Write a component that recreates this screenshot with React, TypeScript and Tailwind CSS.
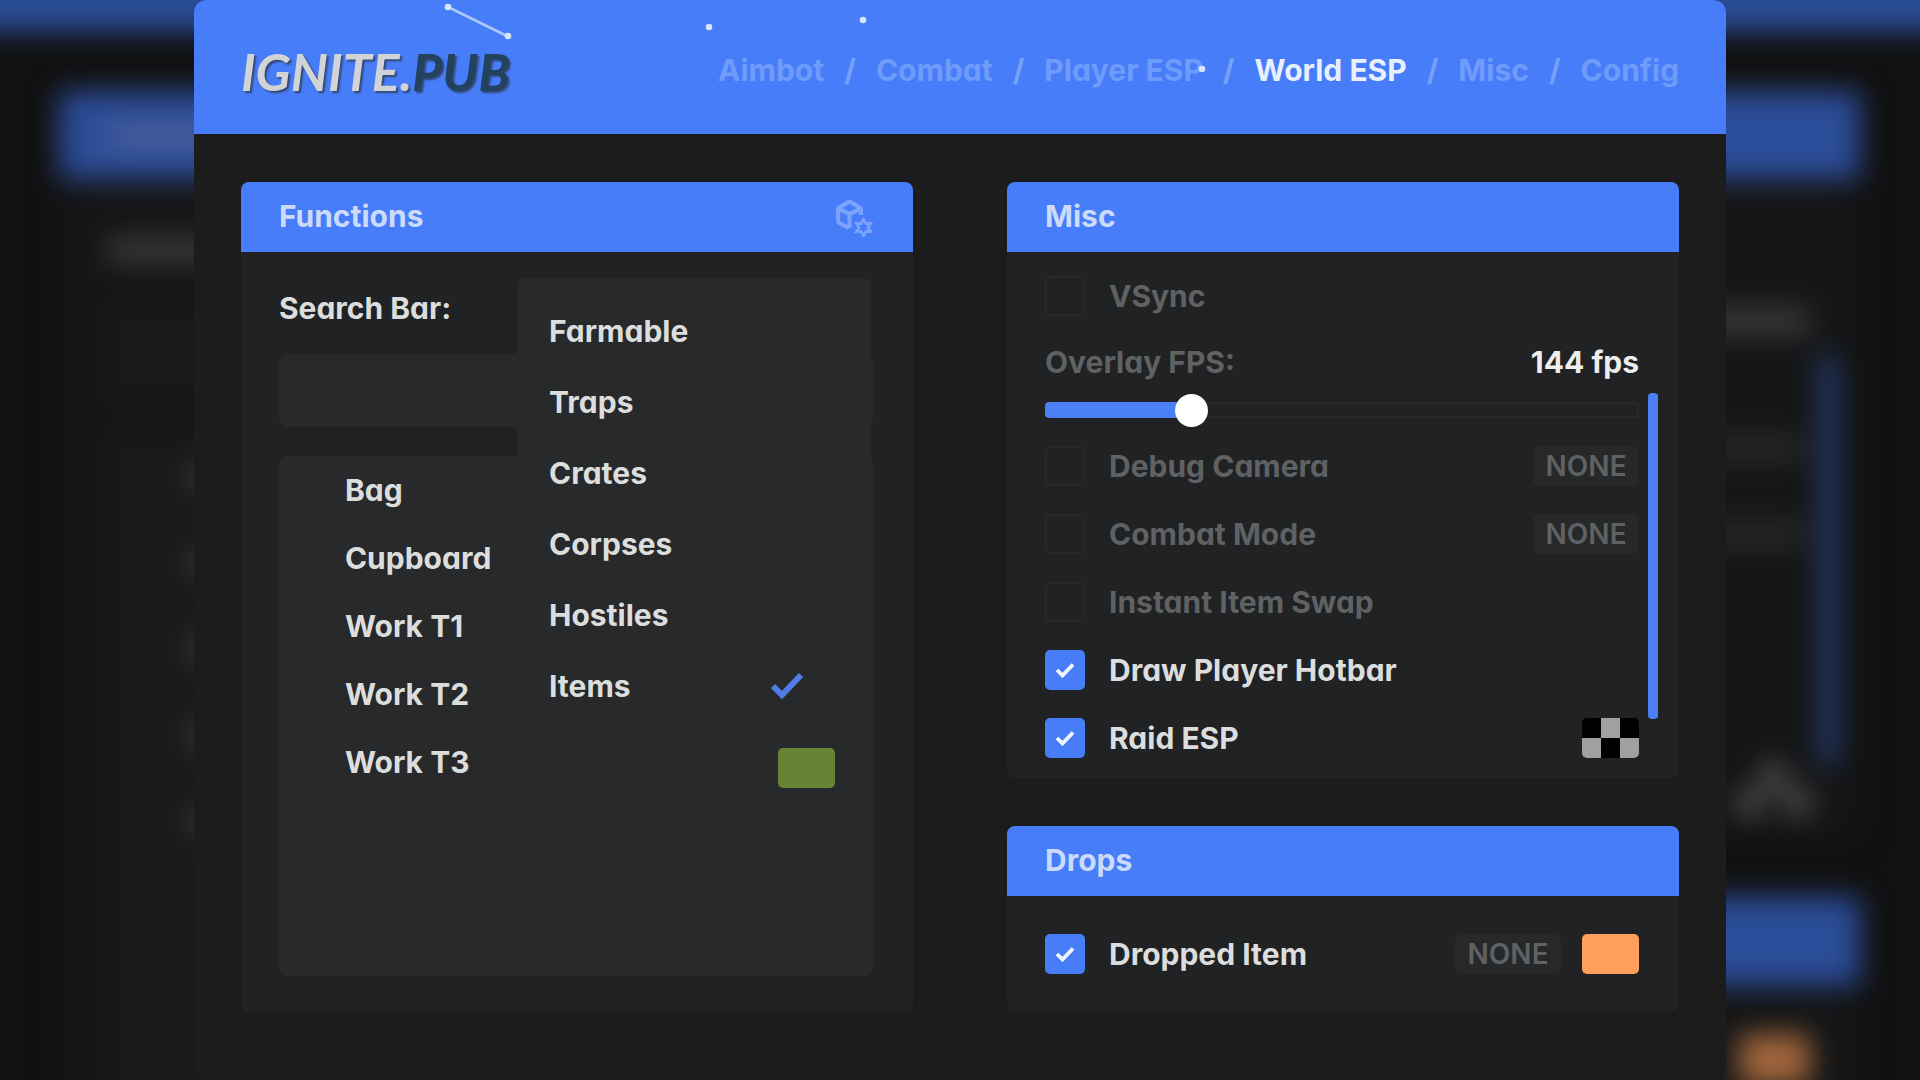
import { useState, type ReactNode } from "react";

const NAV = ["Aimbot", "Combat", "Player ESP", "World ESP", "Misc", "Config"];
const OBJECTS = ["Bag", "Cupboard", "Work T1", "Work T2", "Work T3"];
const CATEGORIES = ["Farmable", "Traps", "Crates", "Corpses", "Hostiles", "Items"];

function Backdrop() {
  return (
    <div aria-hidden="true" className="absolute inset-0 overflow-hidden bg-[#111111]">
      <div className="absolute inset-0 blur-[14px]">
        <div className="absolute -inset-x-10 -top-10 h-[71px] bg-[#2b4c98]" />

        <div className="absolute top-[179px] -bottom-10 left-[59px] w-[300px] bg-[#141516]" />
        <div className="absolute top-[91px] left-[59px] h-[88px] w-[300px] bg-[#2b4c98]" />
        <div className="absolute top-[124px] left-[107px] h-6 w-[180px] bg-[#4a619a]" />
        <div className="absolute top-[238px] left-[107px] h-6 w-[180px] bg-[#3c3c3e]" />
        <div className="absolute top-[305px] left-[107px] h-[94px] w-[250px] bg-[#18191a]" />
        <div className="absolute top-[435px] -bottom-10 left-[107px] w-[250px] bg-[#18191a]" />
        <div className="absolute top-[464px] left-[188px] flex w-[80px] flex-col gap-[60px]">
          {OBJECTS.map((o) => (
            <div key={o} className="h-[26px] bg-[#39393b]" />
          ))}
        </div>

        <div className="absolute top-[179px] right-[60px] h-[657px] w-[300px] bg-[#141516]" />
        <div className="absolute top-[91px] right-[60px] h-[88px] w-[300px] bg-[#2b4c98]" />
        <div className="absolute top-[307px] right-[110px] h-7 w-[136px] bg-[#39393b]" />
        <div className="absolute top-[434px] right-[116px] h-7 w-[100px] bg-[#272728]" />
        <div className="absolute top-[520px] right-[116px] h-7 w-[100px] bg-[#272728]" />
        <div className="absolute top-[356px] right-[85px] h-[408px] w-[13px] bg-[#2b4c98]" />
        <div className="absolute top-[764px] right-[134px] h-[26px] w-6 bg-[#565656]" />
        <div className="absolute top-[790px] right-[110px] h-[26px] w-6 bg-[#565656]" />
        <div className="absolute top-[790px] right-[158px] h-[26px] w-6 bg-[#565656]" />
        <div className="absolute top-[985px] right-[60px] -bottom-10 w-[300px] bg-[#141516]" />
        <div className="absolute top-[897px] right-[60px] h-[88px] w-[300px] bg-[#2b4c98]" />
        <div className="absolute top-[1034px] right-[110px] h-[52px] w-[71px] bg-[#a0663c]" />
      </div>
    </div>
  );
}

function Particles() {
  return (
    <svg
      aria-hidden="true"
      viewBox="0 0 1532 134"
      preserveAspectRatio="xMinYMin meet"
      className="pointer-events-none absolute inset-0 h-full w-full"
    >
      <path d="M254 7 L313 36" stroke="#a9c8fb" strokeWidth="2.6" />
      <g fill="#d4e6fb">
        <circle cx="254" cy="7" r="3.3" />
        <circle cx="314" cy="36" r="3.3" />
        <circle cx="515" cy="27" r="3.3" />
        <circle cx="669" cy="20" r="3.3" />
        <circle cx="1008" cy="69" r="3.3" />
      </g>
    </svg>
  );
}

function BoxGearIcon() {
  return (
    <svg viewBox="0 0 38 40" className="h-10 w-[38px]" fill="none" stroke="#7ba3fb" strokeWidth="4.2" strokeLinejoin="round">
      <path d="M14 31 L4.500 26 Q3 25 3 23.500 V13 Q3 11.500 4.500 10.500 L12.500 5.500 Q14.500 4.300 16.500 5.500 L24.500 10.500 Q26 11.500 26 13 V18" />
      <path d="M4 12 L14.500 17 L25 12 M14.500 17 V31" />
      <path
        d="M28.500 22.500 L31 26.500 L35.500 26.500 L33 30.500 L35.500 34.500 L31 34.500 L28.500 38.500 L26 34.500 L21.500 34.500 L24 30.500 L21.500 26.500 L26 26.500 Z"
        strokeWidth="2.800"
        strokeLinejoin="miter"
      />
    </svg>
  );
}

function Panel({ title, icon, children }: { title: string; icon?: ReactNode; children: ReactNode }) {
  return (
    <section className="overflow-hidden rounded-lg bg-[#202224]">
      <header className="flex h-[70px] items-center justify-between bg-[#477df9] pr-10 pl-[38px]">
        <h2 className="pb-[2px] text-[#ccdafb]">{title}</h2>
        {icon}
      </header>
      {children}
    </section>
  );
}

function KeyBind({ label }: { label: string }) {
  return (
    <button
      type="button"
      aria-label={`${label} key`}
      className="h-10 w-[106px] rounded-md bg-[#26282a] text-[28px] font-semibold text-[#5f6163]"
    >
      NONE
    </button>
  );
}

function Toggle({ label, initial = false, children }: { label: string; initial?: boolean; children?: ReactNode }) {
  const [on, setOn] = useState(initial);
  return (
    <div className="flex h-[68px] items-center justify-between">
      <label className={on ? "flex items-center gap-6 text-[#dcdddd]" : "flex items-center gap-6 text-[#5f6163]"}>
        <span className="grid place-items-center">
          <input
            type="checkbox"
            checked={on}
            onChange={() => setOn(!on)}
            className="col-start-1 row-start-1 size-10 appearance-none rounded-[5px] border-2 border-[#27292b] checked:border-[#477df9] checked:bg-[#477df9]"
          />
          {on && (
            <svg viewBox="0 0 20 16" className="pointer-events-none col-start-1 row-start-1 h-4 w-5" fill="none">
              <path d="M2 8 L7.500 13.500 L18 2.500" stroke="#f2f6ff" strokeWidth="3.800" />
            </svg>
          )}
        </span>
        {label}
      </label>
      <div className="flex items-center gap-[21px]">{children}</div>
    </div>
  );
}

function FpsSlider() {
  const [fps, setFps] = useState(144);
  const min = 60;
  const max = 426;
  const fill = ((fps - min) / (max - min)) * 100;
  return (
    <div className="pb-[6px]">
      <div className="flex h-16 items-center justify-between">
        <label htmlFor="fps" className="text-[#5f6163]">
          Overlay FPS:
        </label>
        <output htmlFor="fps" className="text-[#eeeeee]">
          {fps} fps
        </output>
      </div>
      <div className="flex h-8 items-center">
        <input
          id="fps"
          type="range"
          min={min}
          max={max}
          value={fps}
          onChange={(e) => setFps(Number(e.target.value))}
          style={{
            background: `linear-gradient(to right, #4b7ff5 ${fill}%, transparent ${fill}%) border-box, linear-gradient(#202224, #202224) padding-box, linear-gradient(#27292b, #27292b) border-box`,
          }}
          className="h-4 w-full appearance-none rounded-[4px] border-2 border-transparent [&::-webkit-slider-thumb]:size-[33px] [&::-webkit-slider-thumb]:appearance-none [&::-webkit-slider-thumb]:rounded-full [&::-webkit-slider-thumb]:bg-white"
        />
      </div>
    </div>
  );
}

function Functions() {
  const [picked, setPicked] = useState("Items");
  return (
    <Panel title="Functions" icon={<BoxGearIcon />}>
      <div className="relative pt-[22px] pr-10 pb-[37px] pl-[38px]">
        <label htmlFor="search" className="flex h-[68px] items-center text-[#dcdddd]">
          Search Bar:
        </label>
        <input
          id="search"
          type="text"
          className="mt-3 block h-[73px] w-full rounded-lg bg-[#27292b] px-6 text-[#dcdddd] outline-none"
        />
        <ul className="mt-[29px] min-h-[520px] rounded-lg bg-[#27292b] pr-[38px] pl-[66px] text-[#dcdddd]">
          {OBJECTS.map((name) => (
            <li key={name} className="flex h-[68px] items-center justify-between">
              {name}
              {name === "Work T3" && (
                <button
                  type="button"
                  aria-label="Work T3 colour"
                  className="mb-2 h-10 w-[57px] self-end rounded-[5px] bg-[#688236]"
                />
              )}
            </li>
          ))}
        </ul>
        <ul className="absolute top-[26px] right-[42px] w-[354px] rounded-lg bg-[#27292b] pt-[17px] pb-3 text-[#dcdddd]">
          {CATEGORIES.map((name) => (
            <li key={name}>
              <button
                type="button"
                aria-pressed={picked === name}
                onClick={() => setPicked(name)}
                className="flex h-[71px] w-full items-center justify-between pr-[67px] pl-8"
              >
                {name}
                {picked === name && (
                  <svg viewBox="0 0 34 28" className="h-7 w-[34px]" fill="none">
                    <path d="M3 14 L12 23 L31 3" stroke="#4f7ce6" strokeWidth="6" />
                  </svg>
                )}
              </button>
            </li>
          ))}
        </ul>
      </div>
    </Panel>
  );
}

function Misc() {
  return (
    <Panel title="Misc">
      <div className="relative pt-[10px] pr-10 pb-[6px] pl-[38px]">
        <Toggle label="VSync" />
        <FpsSlider />
        <Toggle label="Debug Camera">
          <KeyBind label="Debug Camera" />
        </Toggle>
        <Toggle label="Combat Mode">
          <KeyBind label="Combat Mode" />
        </Toggle>
        <Toggle label="Instant Item Swap" />
        <Toggle label="Draw Player Hotbar" initial />
        <Toggle label="Raid ESP" initial>
          <button
            type="button"
            aria-label="Raid ESP colour"
            className="grid h-10 w-[57px] grid-cols-3 grid-rows-2 overflow-hidden rounded-[5px] bg-black"
          >
            <span className="col-start-2 row-start-1 h-full w-full bg-[#a0a0a0]" />
            <span className="col-start-1 row-start-2 h-full w-full bg-[#a0a0a0]" />
            <span className="col-start-3 row-start-2 h-full w-full bg-[#a0a0a0]" />
          </button>
        </Toggle>
        <div className="absolute top-[141px] right-[21px] h-[326px] w-[10px] rounded-[4px] bg-[#4b7ff3]" />
      </div>
    </Panel>
  );
}

export default function App() {
  const [tab, setTab] = useState("World ESP");
  return (
    <div className="relative min-h-screen overflow-hidden font-['Inter',sans-serif] text-[30px] leading-8 font-bold [font-feature-settings:'cv11'] [font-optical-sizing:none]">
      <Backdrop />
      <main className="relative mx-[10.1%] min-h-screen overflow-hidden rounded-xl bg-[#1c1c1c]">
        <header className="relative flex h-[134px] items-center justify-between bg-[#477df9] px-[47px] text-[#76a1fb]">
          <h1 className="pt-2 font-['Lato',sans-serif] text-[52px] leading-10 font-bold text-[#d2d3d6] italic [text-shadow:2px_2px_2px_#33466f]">
            IGNITE.<span className="text-[#22425f]">PUB</span>
          </h1>
          <nav className="flex items-center gap-5 pt-[6px]">
            {NAV.map((name, i) => (
              <div key={name} className="flex items-center gap-5">
                {i > 0 && <span>/</span>}
                <a
                  href="#"
                  onClick={(e) => {
                    e.preventDefault();
                    setTab(name);
                  }}
                  className={tab === name ? "text-[#e8effd]" : "text-[#6f9cfb]"}
                >
                  {name}
                </a>
              </div>
            ))}
          </nav>
          <Particles />
        </header>
        <div className="grid grid-cols-2 items-start gap-[94px] px-[47px] py-12">
          <Functions />
          <div className="flex flex-col gap-12">
            <Misc />
            <Panel title="Drops">
              <div className="pt-6 pr-10 pb-[23px] pl-[38px]">
                <Toggle label="Dropped Item" initial>
                  <KeyBind label="Dropped Item" />
                  <button
                    type="button"
                    aria-label="Dropped Item colour"
                    className="h-10 w-[57px] rounded-[5px] bg-[#ff9f5c]"
                  />
                </Toggle>
              </div>
            </Panel>
          </div>
        </div>
      </main>
    </div>
  );
}
